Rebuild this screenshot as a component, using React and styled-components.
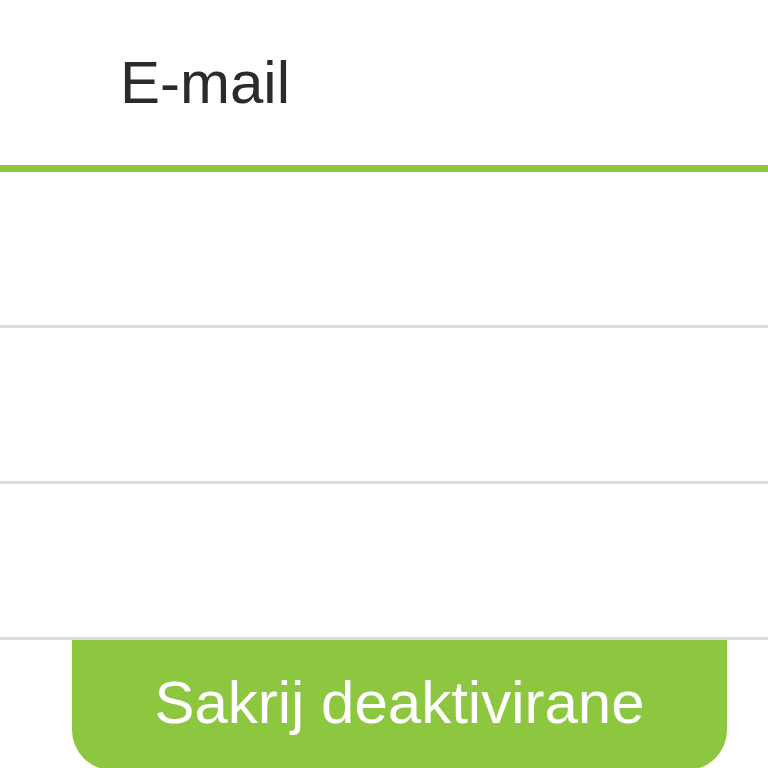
import styled, { createGlobalStyle } from 'styled-components'

const GlobalStyle = createGlobalStyle`
  html, body {
    margin: 0;
    padding: 0;
    background: #fff;
    overflow: hidden;
  }
  body {
    font-family: "Liberation Sans", Arial, sans-serif;
  }
`

const Page = styled.div`
  width: 768px;
  height: 768px;
  display: flex;
  flex-direction: column;
  overflow: hidden;
`

const Table = styled.table`
  width: 100%;
  border-collapse: collapse;
  table-layout: fixed;
`

const HeadCell = styled.th`
  height: 168px;
  box-sizing: border-box;
  padding: 48px 0 0 120px;
  vertical-align: top;
  text-align: left;
  font-size: 60px;
  line-height: 69px;
  font-weight: normal;
  color: #2b2b2b;
  border-bottom: 7px solid #8dc63f;
`

const Cell = styled.td`
  height: 153px;
  padding: 0;
  border-bottom: 3px solid #dcdcdc;
`

const HideButton = styled.button`
  align-self: flex-start;
  margin-left: 72px;
  width: 655px;
  height: 130px;
  flex-shrink: 0;
  box-sizing: border-box;
  padding: 28px 0 33px;
  border: none;
  border-radius: 0 0 40px 40px;
  background: #8dc63f;
  color: #fff;
  font-family: "Liberation Sans", Arial, sans-serif;
  font-size: 60px;
  line-height: 69px;
  text-align: center;
  display: block;
`

const rows = [1, 2, 3]

export default function App() {
  return (
    <>
      <GlobalStyle />
      <Page>
        <Table>
          <thead>
            <tr>
              <HeadCell>E-mail</HeadCell>
            </tr>
          </thead>
          <tbody>
            {rows.map((r) => (
              <tr key={r}>
                <Cell />
              </tr>
            ))}
          </tbody>
        </Table>
        <HideButton>Sakrij deaktivirane</HideButton>
      </Page>
    </>
  )
}
